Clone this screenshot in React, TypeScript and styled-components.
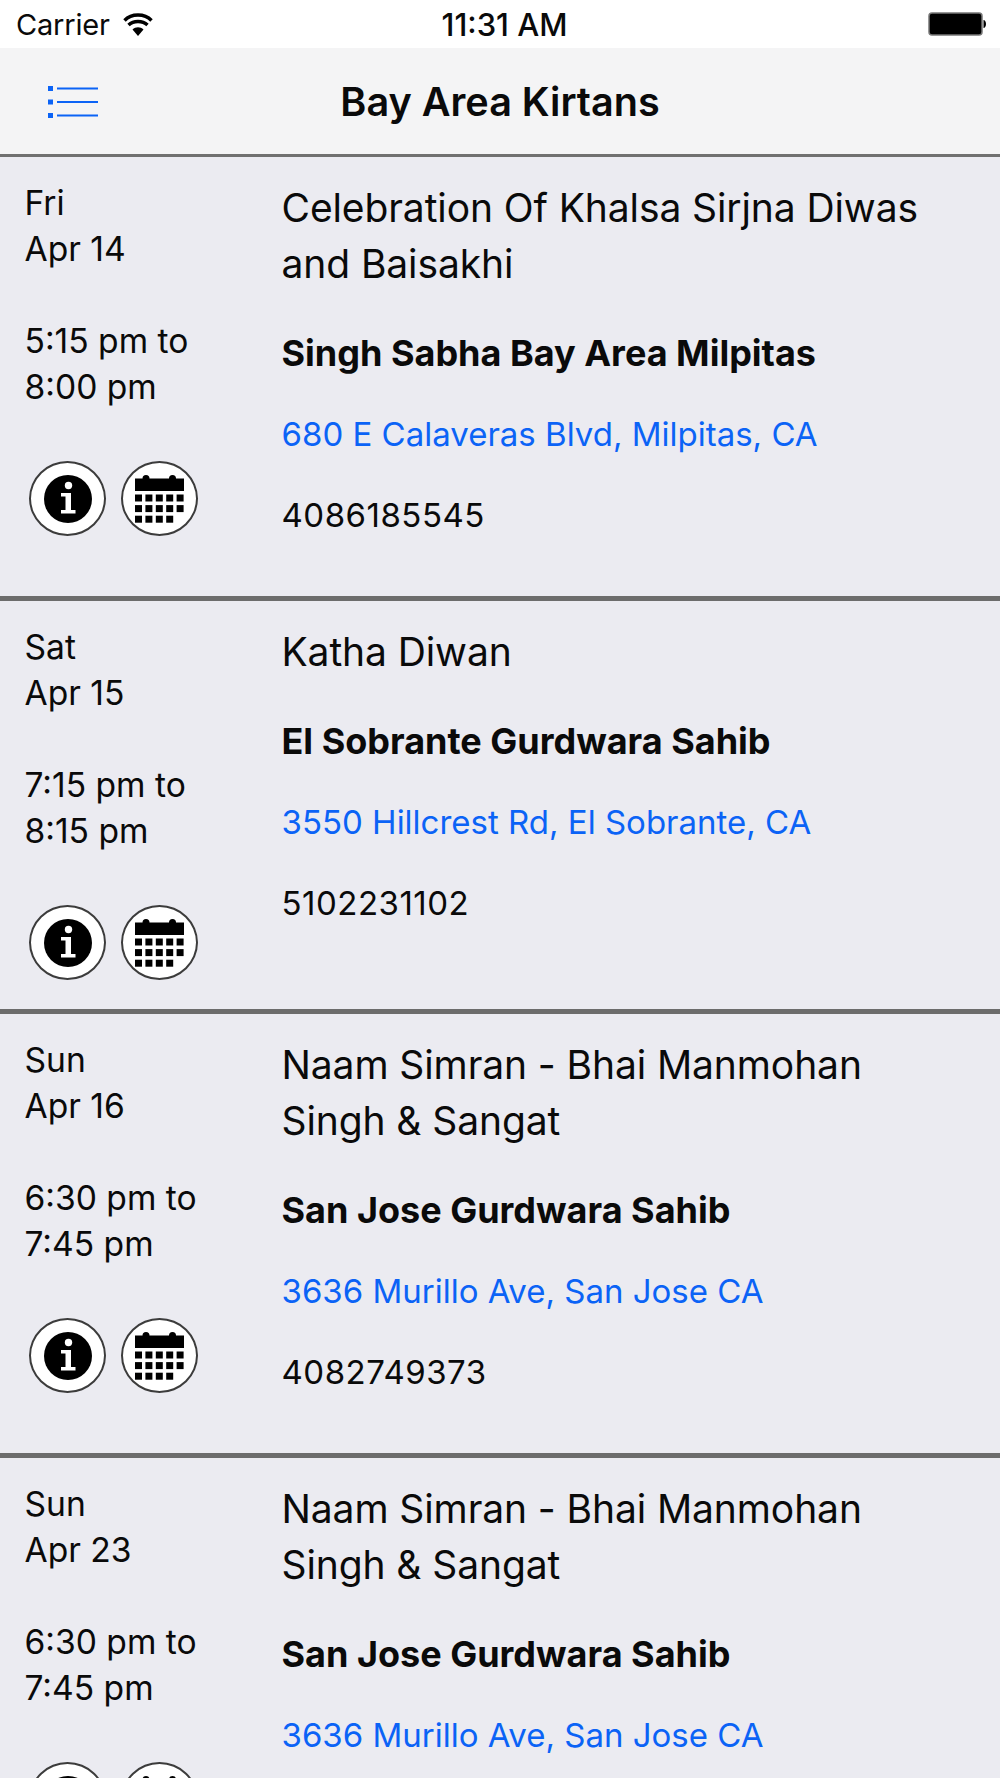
import React from "react";
import styled, { createGlobalStyle } from "styled-components";

const GlobalStyle = createGlobalStyle`
  html, body {
    margin: 0;
    padding: 0;
    background: #ebebf1;
    font-family: Inter, "Liberation Sans", sans-serif;
    color: #0a0a0a;
  }
`;

const Screen = styled.div`
  width: 1000px;
  height: 1778px;
  overflow: hidden;
  background: #ebebf1;
`;

const StatusBar = styled.div`
  height: 48px;
  background: #ffffff;
  display: grid;
  grid-template-columns: 1fr auto 1fr;
  align-items: center;
  padding: 0 14px 0 16px;
  box-sizing: border-box;
`;

const Carrier = styled.div`
  display: flex;
  align-items: center;
  gap: 13px;
  font-size: 29px;
  letter-spacing: -0.2px;
`;

const Clock = styled.div`
  font-size: 31px;
  font-weight: 500;
  margin-left: 7px;
`;

const Battery = styled.div`
  justify-self: end;
  display: flex;
`;

const NavBar = styled.div`
  height: 104px;
  padding-top: 2px;
  background: #f4f4f5;
  border-bottom: 3px solid #707070;
  position: relative;
  display: flex;
  align-items: center;
  padding-left: 48px;
`;

const NavTitle = styled.h1`
  position: absolute;
  left: 0;
  right: 0;
  margin: 0;
  text-align: center;
  font-size: 39.6px;
  font-weight: 600;
`;

const Row = styled.div`
  display: grid;
  grid-template-columns: 257px 1fr;
  padding: 0 25px 0 24.5px;
  border-bottom: 5px solid #6c6c6c;
`;

const Side = styled.div`
  display: flex;
  flex-direction: column;
  gap: 46px;
  padding-top: 23px;
  padding-bottom: 29px;
`;

const SideText = styled.div`
  font-size: 33.6px;
  line-height: 46px;
`;

const Actions = styled.div`
  display: flex;
  gap: 15px;
  margin-top: 5px;
  padding-left: 4.500px;
`;

const RoundButton = styled.div`
  width: 77px;
  height: 75px;
  box-sizing: border-box;
  border: 2px solid #3c3c3c;
  border-radius: 50%;
  background: #ffffff;
  display: flex;
  align-items: center;
  justify-content: center;
`;

const Main = styled.div`
  padding-top: 23px;
  padding-bottom: 58px;
`;

const Title = styled.div`
  font-size: 39px;
  line-height: 56px;
  letter-spacing: -0.1px;
`;

const Venue = styled.div`
  font-size: 36px;
  font-weight: 700;
  line-height: 46px;
  margin-top: 38px;
`;

const Address = styled.div`
  font-size: 33px;
  line-height: 46px;
  margin-top: 35px;
  color: #0b63f6;
`;

const Phone = styled.div`
  font-size: 33px;
  line-height: 46px;
  margin-top: 35px;
  letter-spacing: 0.5px;
`;

const WifiIcon = () => (
  <svg width="30" height="23" viewBox="0 0 30 23">
    <path d="M15 23L9.500 16.500C12.500 13.600 17.500 13.600 20.500 16.500z" fill="#000" />
    <path d="M5.500 12C10.500 7.300 19.500 7.300 24.500 12" fill="none" stroke="#000" strokeWidth="3.400" />
    <path d="M1.500 7.500C8.500 0.200 21.500 0.200 28.500 7.500" fill="none" stroke="#000" strokeWidth="3.400" />
  </svg>
);

const BatteryIcon = () => (
  <svg width="58" height="24" viewBox="0 0 58 24">
    <rect x="1" y="1" width="53" height="22" rx="3" fill="#000" stroke="#777" strokeWidth="1.500" />
    <path d="M55.500 8c1.500 0 2.500 2 2.500 4s-1 4-2.500 4z" fill="#000" />
  </svg>
);

const MenuIcon = () => (
  <svg width="50" height="32" viewBox="0 0 50 32" style={{ display: "block" }}>
    {[2.500, 16, 29.500].map((y) => (
      <g key={y} fill="#0b63f6">
        <rect x="0" y={y - 2.500} width="5" height="5" />
        <rect x="9" y={y - 1} width="41" height="2" />
      </g>
    ))}
  </svg>
);

const InfoIcon = () => (
  <svg width="48" height="48" viewBox="0 0 48 48">
    <circle cx="24" cy="24" r="24" fill="#000" />
    <circle cx="24.500" cy="10.500" r="3.700" fill="#fff" />
    <path d="M17 18h10v17h4.500v3.500H17v-3.500h4.500V21.500H17z" fill="#fff" />
  </svg>
);

const CalendarIcon = () => {
  const cells: [number, number][] = [];
  [0, 1, 2].forEach((r) =>
    [0, 1, 2, 3, 4].forEach((c) => {
      if (!(r === 2 && c === 4)) cells.push([c, r]);
    })
  );
  return (
    <svg width="49" height="49" viewBox="0 0 49 49">
      <path d="M0 4.500h7.500a3.500 3.500 0 0 1 7 0h19.500a3.500 3.500 0 0 1 7 0H49V17H0z" fill="#000" />
      {cells.map(([c, r]) => (
        <rect key={`${c}-${r}`} x={c * 10.400} y={20.500 + r * 10.600} width="7" height="7" fill="#000" />
      ))}
    </svg>
  );
};

type Event = {
  day: string;
  date: string;
  from: string;
  to: string;
  title: string[];
  venue: string;
  address: string;
  phone: string;
};

const events: Event[] = [
  {
    day: "Fri",
    date: "Apr 14",
    from: "5:15 pm to",
    to: "8:00 pm",
    title: ["Celebration Of Khalsa Sirjna Diwas", "and Baisakhi"],
    venue: "Singh Sabha Bay Area Milpitas",
    address: "680 E Calaveras Blvd, Milpitas, CA",
    phone: "4086185545",
  },
  {
    day: "Sat",
    date: "Apr 15",
    from: "7:15 pm to",
    to: "8:15 pm",
    title: ["Katha Diwan"],
    venue: "El Sobrante Gurdwara Sahib",
    address: "3550 Hillcrest Rd, El Sobrante, CA",
    phone: "5102231102",
  },
  {
    day: "Sun",
    date: "Apr 16",
    from: "6:30 pm to",
    to: "7:45 pm",
    title: ["Naam Simran - Bhai Manmohan", "Singh & Sangat"],
    venue: "San Jose Gurdwara Sahib",
    address: "3636 Murillo Ave, San Jose CA",
    phone: "4082749373",
  },
  {
    day: "Sun",
    date: "Apr 23",
    from: "6:30 pm to",
    to: "7:45 pm",
    title: ["Naam Simran - Bhai Manmohan", "Singh & Sangat"],
    venue: "San Jose Gurdwara Sahib",
    address: "3636 Murillo Ave, San Jose CA",
    phone: "4082749373",
  },
];

export default function App() {
  return (
    <Screen>
      <GlobalStyle />
      <StatusBar>
        <Carrier>
          Carrier
          <WifiIcon />
        </Carrier>
        <Clock>11:31 AM</Clock>
        <Battery>
          <BatteryIcon />
        </Battery>
      </StatusBar>
      <NavBar>
        <MenuIcon />
        <NavTitle>Bay Area Kirtans</NavTitle>
      </NavBar>
      {events.map((e) => (
        <Row key={e.date}>
          <Side>
            <SideText>
              {e.day}
              <br />
              {e.date}
            </SideText>
            <SideText>
              {e.from}
              <br />
              {e.to}
            </SideText>
            <Actions>
              <RoundButton>
                <InfoIcon />
              </RoundButton>
              <RoundButton>
                <CalendarIcon />
              </RoundButton>
            </Actions>
          </Side>
          <Main>
            <Title>
              {e.title.map((line) => (
                <div key={line}>{line}</div>
              ))}
            </Title>
            <Venue>{e.venue}</Venue>
            <Address>{e.address}</Address>
            <Phone>{e.phone}</Phone>
          </Main>
        </Row>
      ))}
    </Screen>
  );
}
